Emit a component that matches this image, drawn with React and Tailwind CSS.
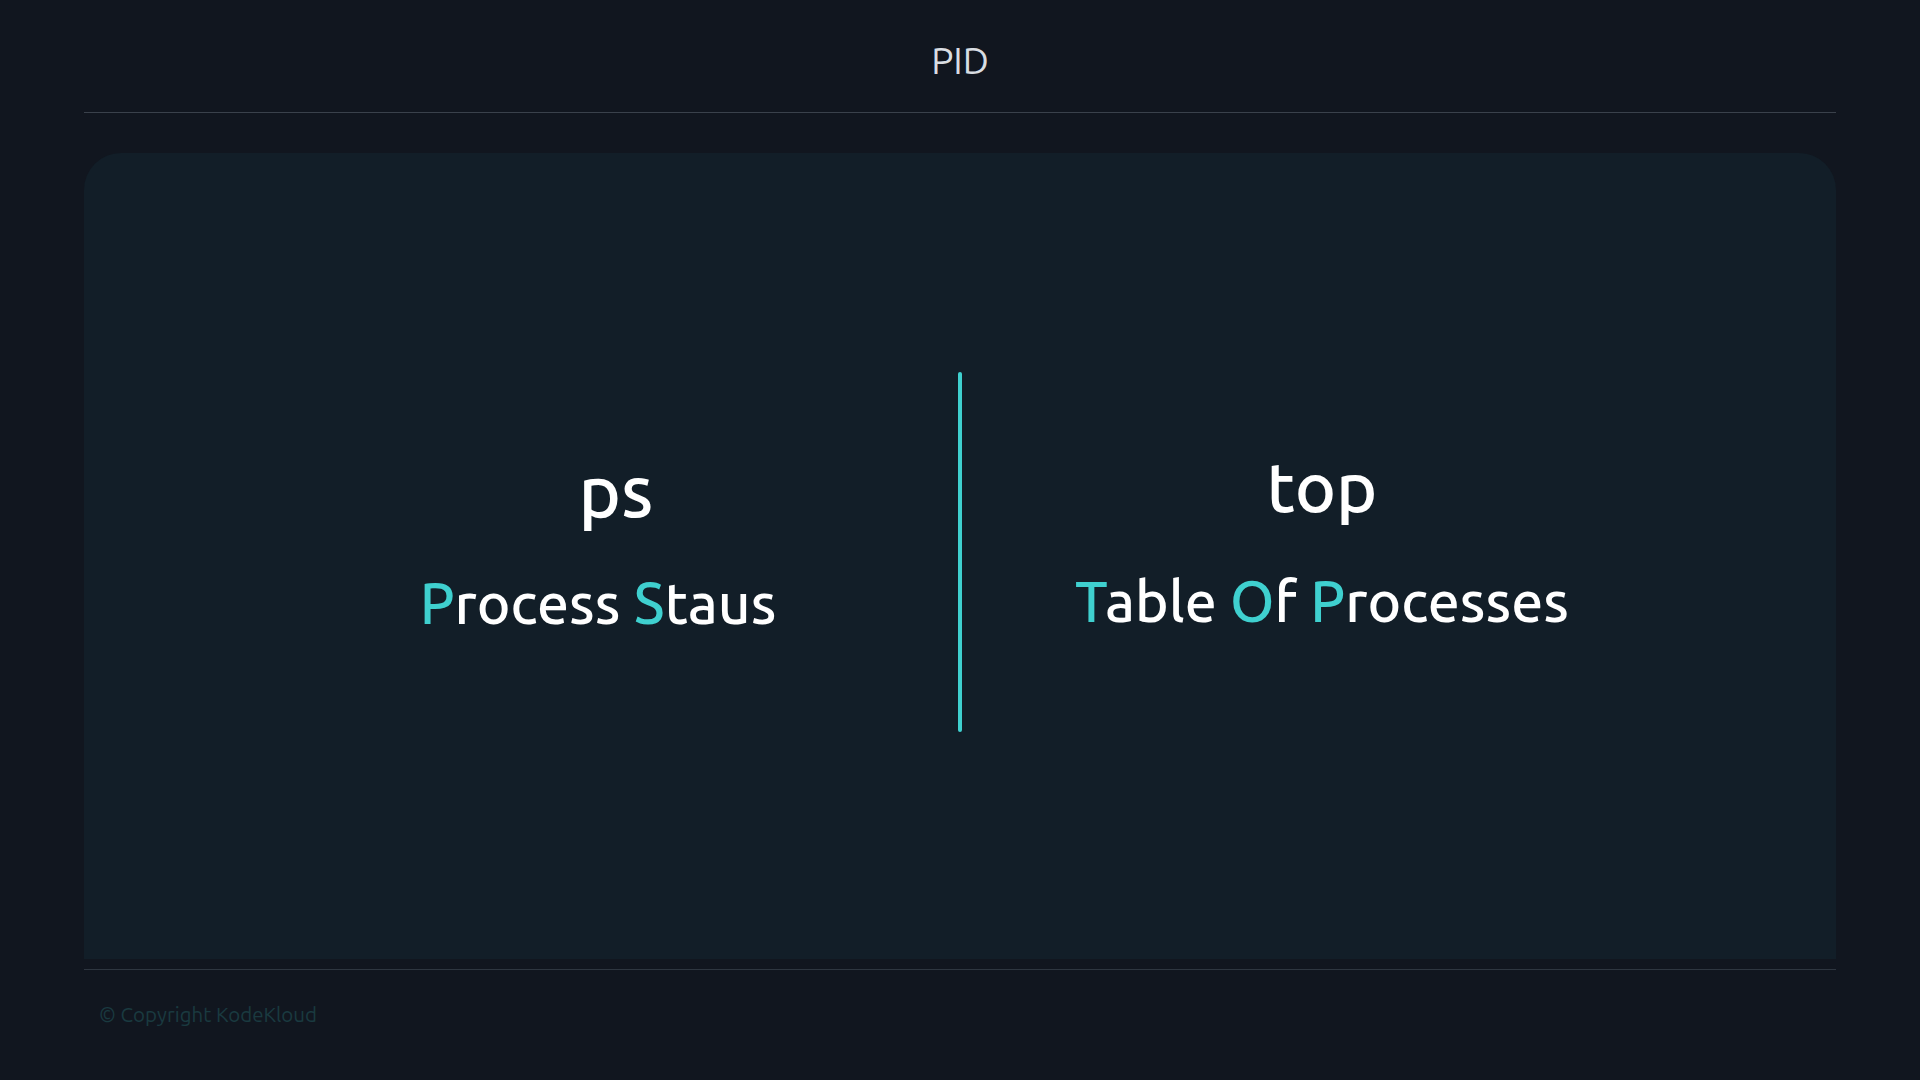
export default function App() {
  const f = { fontFamily: "Ubuntu, 'Noto Sans', 'Open Sans', sans-serif" };
  const c = "text-[#3fd0cf]";
  return (
    <div className="w-[1920px] h-[1080px] bg-[#11161f] flex flex-col px-[84px]" style={f}>
      <div className="h-[113px] border-b border-[#3a414b] flex items-center justify-center">
        <span className="text-[37px] text-[#d9dde2] pt-[10px]">PID</span>
      </div>
      <div className="mt-[40px] h-[806px] bg-[#121e28] rounded-t-[37px] flex items-center justify-center gap-[80px]">
        <div className="w-[560px] flex flex-col items-center text-white -mt-[10px] font-medium">
          <div className="text-[72px] leading-none h-[80px] ml-[36px]">ps</div>
          <div className="text-[57px] mt-[26px]"><span className={c}>P</span>rocess <span className={c}>S</span>taus</div>
        </div>
        <div className="w-[4px] h-[360px] bg-[#3fd0cf] rounded-full -mt-[8px]" />
        <div className="w-[560px] flex flex-col items-center text-white -mt-[10px] font-medium">
          <div className="text-[70px] leading-none h-[80px] -mt-[6px]">top</div>
          <div className="text-[57px] mt-[28px]"><span className={c}>T</span>able <span className={c}>O</span>f <span className={c}>P</span>rocesses</div>
        </div>
      </div>
      <div className="border-t border-[#2e3640] mt-[10px] pt-[30px] pl-[15px] text-[20.5px] text-[#1a3a40]">© Copyright KodeKloud</div>
    </div>
  );
}
